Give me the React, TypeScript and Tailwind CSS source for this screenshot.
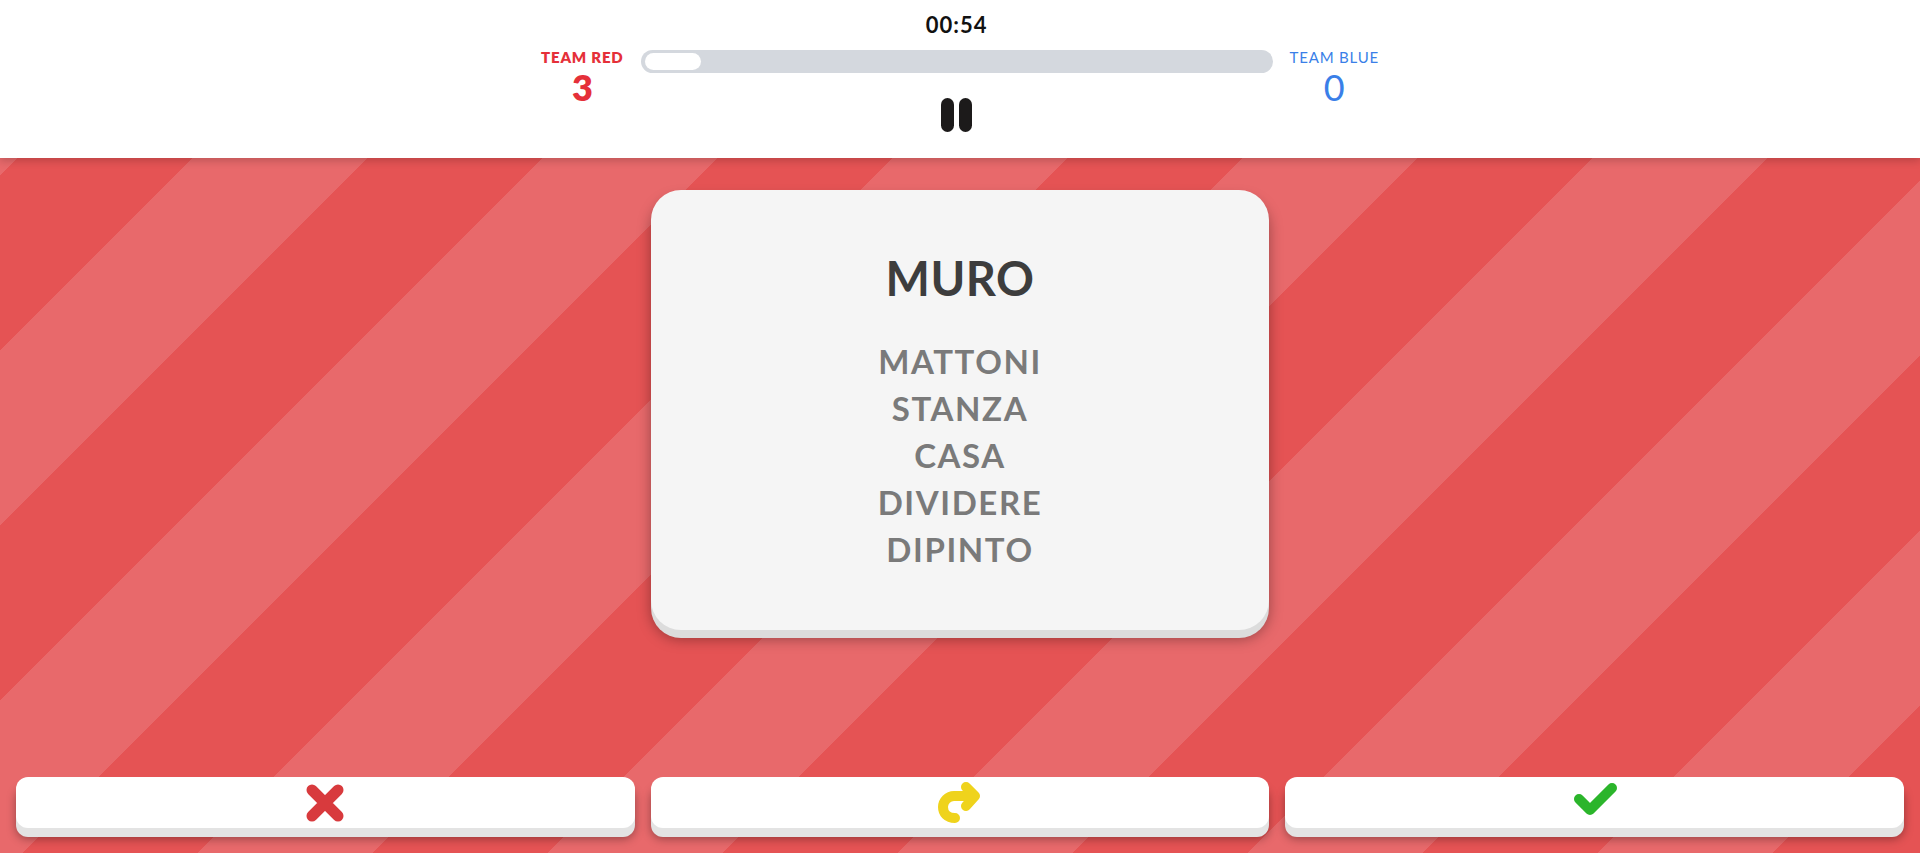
import React from "react";

const words = ["MATTONI", "STANZA", "CASA", "DIVIDERE", "DIPINTO"];

function PauseIcon() {
  return (
    <div className="flex gap-[5px]">
      <span className="block h-[34px] w-[13px] rounded-full bg-[#1c1a1a]" />
      <span className="block h-[34px] w-[13px] rounded-full bg-[#1c1a1a]" />
    </div>
  );
}

function CrossIcon() {
  return (
    <svg width="40" height="40" viewBox="0 0 40 40" fill="none">
      <path d="M7 7 L33 33 M33 7 L7 33" stroke="#d83a3d" strokeWidth="11" strokeLinecap="round" />
    </svg>
  );
}

function SkipIcon() {
  return (
    <svg width="44" height="44" viewBox="0 0 44 44" fill="none">
      <path
        d="M17 37 C 9 37, 5 32, 5 26 C 5 20, 10 15, 16 15 L 36 15 M 28 6 L 37 15 L 28 25"
        stroke="#efd31c"
        strokeWidth="10"
        strokeLinecap="round"
        strokeLinejoin="round"
      />
    </svg>
  );
}

function CheckIcon() {
  return (
    <svg width="48" height="40" viewBox="0 0 48 40" fill="none">
      <path d="M8 16 L19 27 L41 5" stroke="#2bb52b" strokeWidth="10" strokeLinecap="round" strokeLinejoin="round" />
    </svg>
  );
}

export default function App() {
  return (
    <div
      className="flex h-screen w-full flex-col overflow-hidden bg-[repeating-linear-gradient(135deg,#e8696b_0px,#e8696b_124px,#e55354_124px,#e55354_247.5px)] font-['Lato',sans-serif]"
    >
      {/* Scoreboard */}
      <header className="relative z-10 flex h-[158px] shrink-0 items-start justify-center gap-[17px] bg-white pt-[12px] shadow-[0_3px_8px_rgba(0,0,0,0.18)]">
        <div className="mt-[37px] flex flex-col items-center">
          <span className="text-[15px] leading-[17px] font-extrabold tracking-[0.8px] text-[#e53039]">TEAM RED</span>
          <span className="text-[36px] leading-[42px] font-extrabold text-[#e53039]">3</span>
        </div>

        <div className="flex w-[632px] flex-col items-center">
          <span className="text-[22px] leading-[25px] font-bold tracking-[1px] text-[#111]">00:54</span>
          <div className="mt-[13px] flex h-[23px] w-full items-center rounded-full bg-[#d4d8de] px-[4px]">
            <div className="h-[17px] w-[56px] rounded-full bg-white" />
          </div>
          <div className="mt-[25px]">
            <PauseIcon />
          </div>
        </div>

        <div className="mt-[37px] flex flex-col items-center">
          <span className="text-[15px] leading-[17px] font-normal tracking-[0.8px] text-[#3a7fe8]">TEAM BLUE</span>
          <span className="text-[36px] leading-[42px] font-normal text-[#3a7fe8]">0</span>
        </div>
      </header>

      {/* Card */}
      <main className="flex flex-1 flex-col">
        <div className="mx-auto mt-[32px] flex h-[440px] w-[618px] flex-col items-center rounded-[30px] bg-[#f5f5f5] pt-[60px] shadow-[0_8px_0_#dcdcdc,0_9px_14px_rgba(0,0,0,0.35)]">
          <h1 className="text-[47px] leading-[56px] font-bold tracking-[0.5px] text-[#3d3d3d]">MURO</h1>
          <ul className="mt-[32px] flex flex-col items-center">
            {words.map((w) => (
              <li key={w} className="text-[33px] leading-[47px] font-bold tracking-[1.6px] text-[#7a7a7a]">
                {w}
              </li>
            ))}
          </ul>
        </div>

        {/* Actions */}
        <div className="mt-auto grid grid-cols-3 gap-4 px-4 pb-[25px]">
          <button className="flex h-[51px] items-center justify-center rounded-[12px] bg-white shadow-[0_9px_0_#e3e3e3,0_11px_10px_rgba(0,0,0,0.35)]">
            <CrossIcon />
          </button>
          <button className="flex h-[51px] items-center justify-center rounded-[12px] bg-white shadow-[0_9px_0_#e3e3e3,0_11px_10px_rgba(0,0,0,0.35)]">
            <SkipIcon />
          </button>
          <button className="flex h-[51px] items-center justify-center rounded-[12px] bg-white shadow-[0_9px_0_#e3e3e3,0_11px_10px_rgba(0,0,0,0.35)]">
            <CheckIcon />
          </button>
        </div>
      </main>
    </div>
  );
}
